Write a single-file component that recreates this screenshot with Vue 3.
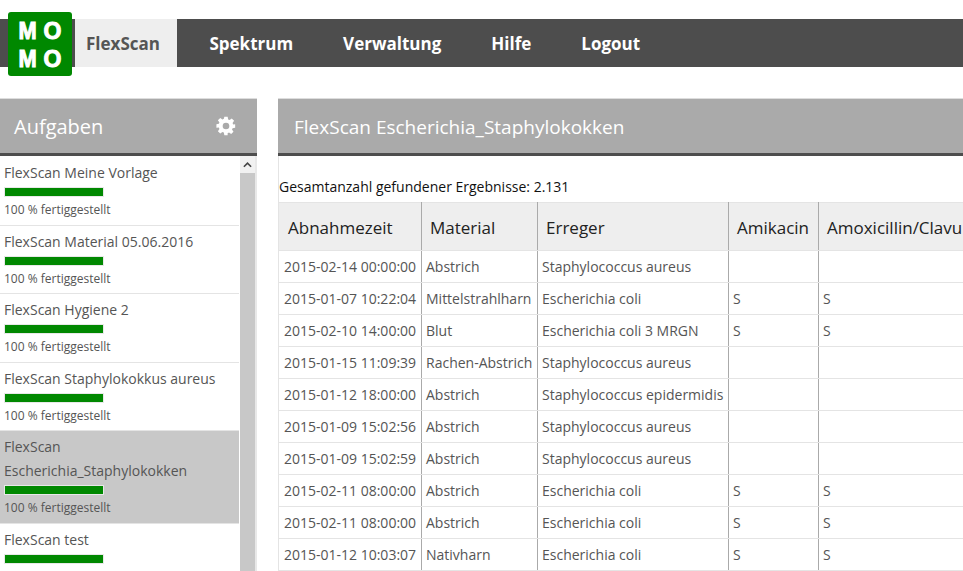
<script setup>
const tasks = [
  { name: 'FlexScan Meine Vorlage' },
  { name: 'FlexScan Material 05.06.2016' },
  { name: 'FlexScan Hygiene 2' },
  { name: 'FlexScan Staphylokokkus aureus' },
  { name: 'FlexScan Escherichia_Staphylokokken', active: true },
  { name: 'FlexScan test' },
]
const rows = [
  ['2015-02-14 00:00:00', 'Abstrich', 'Staphylococcus aureus', '', ''],
  ['2015-01-07 10:22:04', 'Mittelstrahlharn', 'Escherichia coli', 'S', 'S'],
  ['2015-02-10 14:00:00', 'Blut', 'Escherichia coli 3 MRGN', 'S', 'S'],
  ['2015-01-15 11:09:39', 'Rachen-Abstrich', 'Staphylococcus aureus', '', ''],
  ['2015-01-12 18:00:00', 'Abstrich', 'Staphylococcus epidermidis', '', ''],
  ['2015-01-09 15:02:56', 'Abstrich', 'Staphylococcus aureus', '', ''],
  ['2015-01-09 15:02:59', 'Abstrich', 'Staphylococcus aureus', '', ''],
  ['2015-02-11 08:00:00', 'Abstrich', 'Escherichia coli', 'S', 'S'],
  ['2015-02-11 08:00:00', 'Abstrich', 'Escherichia coli', 'S', 'S'],
  ['2015-01-12 10:03:07', 'Nativharn', 'Escherichia coli', 'S', 'S'],
]
const heads = ['Abnahmezeit', 'Material', 'Erreger', 'Amikacin', 'Amoxicillin/Clavulansäure']
</script>

<template>
  <div class="page">
    <header class="top">
      <div class="logo">
        <span class="m">M</span><span>O</span><span class="m">M</span><span>O</span>
      </div>
      <nav class="nav">
        <a class="tab current">FlexScan</a>
        <a class="tab">Spektrum</a>
        <a class="tab">Verwaltung</a>
        <a class="tab">Hilfe</a>
        <a class="tab">Logout</a>
      </nav>
    </header>
    <main class="columns">
      <aside class="side">
        <div class="panel-head side-head">
          <span>Aufgaben</span>
          <svg class="gear" viewBox="0 0 24 24" width="20" height="20">
            <path fill="#fff" fill-rule="evenodd" d="M10 1h4l.6 3.1 1.7.7 2.6-1.8 2.8 2.8-1.8 2.6.7 1.7L23 10v4l-3.1.6-.7 1.7 1.8 2.6-2.8 2.8-2.6-1.8-1.7.7L14 23h-4l-.6-3.1-1.7-.7L5.100 21 2.300 18.200l1.800-2.600-.7-1.700L0.500 14v-4l2.900-.6.7-1.700L2.300 5.100 5.100 2.300 7.700 4.100l1.700-.7zM12 8a4 4 0 1 0 0 8 4 4 0 0 0 0-8z"/>
          </svg>
        </div>
        <div class="list-wrap">
          <ul class="list">
            <li v-for="t in tasks" :key="t.name" class="task" :class="{ active: t.active }">
              <div class="task-name">{{ t.name }}</div>
              <div class="bar"><div class="fill"></div></div>
              <div class="task-note">100 % fertiggestellt</div>
            </li>
          </ul>
          <div class="scroll">
            <div class="scroll-up">
              <svg viewBox="0 0 10 6" width="9" height="6"><path d="M1 5l4-4 4 4" fill="none" stroke="#444" stroke-width="1.800"/></svg>
            </div>
            <div class="scroll-track"></div>
          </div>
        </div>
      </aside>
      <section class="content">
        <div class="panel-head content-head">FlexScan Escherichia_Staphylokokken</div>
        <div class="count">Gesamtanzahl gefundener Ergebnisse: 2.131</div>
        <div class="grid-clip">
          <table class="grid">
            <colgroup>
              <col class="c1" /><col class="c2" /><col class="c3" /><col class="c4" /><col class="c5" />
            </colgroup>
            <thead>
              <tr><th v-for="h in heads" :key="h">{{ h }}</th></tr>
            </thead>
            <tbody>
              <tr v-for="(r, i) in rows" :key="i">
                <td v-for="(c, j) in r" :key="j">{{ c }}</td>
              </tr>
            </tbody>
          </table>
        </div>
      </section>
    </main>
  </div>
</template>

<style>
html, body { margin: 0; overflow: hidden; background: #fff; }
</style>

<style scoped>
.page {
  width: 963px;
  height: 571px;
  overflow: hidden;
  font-family: "Open Sans", "Liberation Sans", sans-serif;
  color: #555;
}
.top {
  display: flex;
  align-items: flex-start;
  height: 64px;
  padding: 12px 0 0 0;
}
.logo {
  flex: none;
  box-sizing: border-box;
  width: 64px;
  height: 64px;
  padding-top: 2px;
  margin-left: 8px;
  border-radius: 3px;
  background: #008800;
  color: #fff;
  display: grid;
  grid-template-columns: 25px 25px;
  grid-auto-rows: 28px;
  justify-content: center;
  align-content: center;
  font: bold 23px/28px "Liberation Sans", sans-serif;
  -webkit-text-stroke: 1px #fff;
  text-align: center;
  z-index: 1;
}
.m { display: inline-block; transform: scaleX(0.95); }
.nav {
  flex: 1;
  display: flex;
  height: 48px;
  margin: 7px 0 0 -72px;
  padding-left: 75px;
  background: #4d4d4d;
}
.tab {
  padding: 0 25px;
  font-size: 17px;
  font-weight: 700;
  line-height: 50px;
  color: #fff;
}
.tab.current {
  margin-right: 7.5px;
  padding: 0 17px 0 11px;
  background: #eee;
  color: #555;
}
.columns {
  display: flex;
  gap: 21px;
  margin-top: 22px;
}
.panel-head {
  box-sizing: border-box;
  height: 58px;
  border-top: 1px solid #ddd;
  border-bottom: 3px solid #4d4d4d;
  background: #aaa;
  color: #fff;
  font-size: 19px;
  line-height: 56px;
}
.side {
  flex: none;
  width: 257px;
}
.side-head {
  display: flex;
  align-items: center;
  justify-content: space-between;
  padding: 0 21px 0 14px;
  font-size: 20px;
  line-height: 55px;
}
.list-wrap {
  display: flex;
  height: 415px;
  border-right: 2px solid #e8e8e8;
}
.list {
  flex: none;
  width: 239px;
  margin: 0;
  padding: 1px 0 0;
  list-style: none;
}
.task {
  padding: 4px 0 5.5px 4px;
  border-bottom: 1px solid #e4e4e4;
}
.task.active { background: #c8c8c8; }
.task-name {
  font-size: 14px;
  line-height: 24px;
  width: 220px;
}
.bar {
  box-sizing: border-box;
  width: 100px;
  height: 10px;
  margin-top: 2px;
  border: 1px solid #e8e8e8;
}
.fill { height: 100%; background: #008800; }
.task-note {
  font-size: 12px;
  line-height: 18px;
  margin-top: 4px;
}
.scroll {
  flex: none;
  width: 15px;
  margin-left: 1px;
  display: flex;
  flex-direction: column;
  background: #c8c8c8;
}
.scroll-up {
  height: 17px;
  background: #f1f1f1;
  display: flex;
  align-items: center;
  justify-content: center;
}
.content {
  flex: 1;
  min-width: 0;
  border-left: 1px solid #e4e4e4;
}
.content-head { margin-left: -1px; padding-left: 16px; }
.count {
  margin-top: 22px;
  font-size: 14px;
  line-height: 18px;
  color: #111;
}
.grid-clip { overflow: hidden; margin-top: 6px; }
.grid {
  width: 1000px;
  table-layout: fixed;
  border-collapse: collapse;
  font-size: 14px;
}
.c1 { width: 142px; }
.c2 { width: 116px; }
.c3 { width: 191px; }
.c4 { width: 90px; }
th {
  height: 48px;
  padding: 1px 8px 0 8.5px;
  box-sizing: border-box;
  background: #eee;
  border: 1px solid;
  border-color: #e4e4e4 #aaa #e4e4e4 #aaa;
  color: #222;
  font-size: 17px;
  font-weight: 400;
  text-align: left;
  white-space: nowrap;
  overflow: hidden;
}
td {
  height: 31px;
  padding: 0 4px 0 4.5px;
  border: 1px solid #e4e4e4;
  border-left-color: #aaa;
  border-right-color: #aaa;
  white-space: nowrap;
}
td:first-child { border-left: 0; padding-left: 5px; }
th:first-child { border-left: 0; padding-left: 9px; }
</style>
